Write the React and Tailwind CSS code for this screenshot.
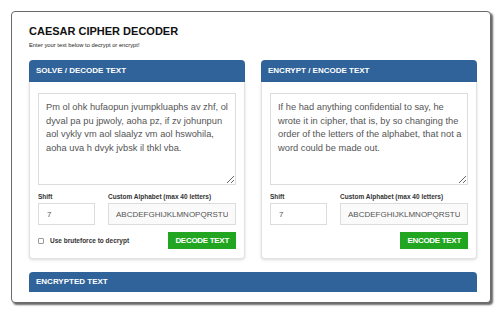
import React from 'react';

const cipherText =
  'Pm ol ohk hufaopun jvumpkluaphs av zhf, ol dyval pa pu jpwoly, aoha pz, if zv johunpun aol vykly vm aol slaalyz vm aol hswohila, aoha uva h dvyk jvbsk il thkl vba.';
const plainText =
  'If he had anything confidential to say, he wrote it in cipher, that is, by so changing the order of the letters of the alphabet, that not a word could be made out.';
const alphabet = 'ABCDEFGHIJKLMNOPQRSTUVWXYZ';

function Panel({ title, text, button, bruteforce }) {
  return (
    <div className="flex flex-col">
      <div className="h-[22px] rounded-t-[4px] bg-[#2f6399] px-[7px] flex items-center text-[8px] font-bold text-white">
        {title}
      </div>
      <div className="border border-t-0 border-[#e2e2e2] rounded-b-[4px] bg-white px-[8px] pt-[11px] pb-[9px] shadow-[0_1px_3px_rgba(0,0,0,0.15)]">
        <textarea
          readOnly
          defaultValue={text}
          className="block w-full h-[92px] border border-[#dcdcdc] pl-[7px] pr-[1px] pt-[7px] pb-[4px] text-[9.3px] leading-[13.5px] text-[#555] outline-none resize-y"
        />
        <div className="mt-[8px] flex gap-[13px]">
          <div className="w-[57px]">
            <div className="text-[6.5px] font-bold text-[#333] leading-[8px]">Shift</div>
            <input
              readOnly
              defaultValue="7"
              className="mt-[2px] block w-full h-[22px] border border-[#dcdcdc] px-[8px] text-[8px] text-[#555] outline-none"
            />
          </div>
          <div className="flex-1">
            <div className="text-[6.5px] font-bold text-[#333] leading-[8px]">Custom Alphabet (max 40 letters)</div>
            <input
              readOnly
              defaultValue={alphabet}
              className="mt-[2px] block w-full h-[22px] border border-[#dcdcdc] bg-[#fafafa] px-[7px] text-[8px] text-[#555] outline-none"
            />
          </div>
        </div>
        <div className="mt-[7px] flex items-center justify-between h-[17px]">
          {bruteforce ? (
            <label className="flex items-center gap-[6px] text-[6.5px] font-bold text-[#333]">
              <span className="block w-[6px] h-[6px] border border-[#999] rounded-[1px] bg-white" />
              Use bruteforce to decrypt
            </label>
          ) : (
            <span />
          )}
          <button className="h-[17px] px-[7px] bg-[#22a622] text-white text-[8px] font-bold tracking-[-0.3px]">
            {button}
          </button>
        </div>
      </div>
    </div>
  );
}

export default function App() {
  return (
    <div
      className="w-[500px] h-[313px] bg-white pl-[11px] pt-[11px] overflow-hidden"
      style={{ fontFamily: '"Liberation Sans", Arial, sans-serif' }}
    >
      <div className="w-[480px] h-[292px] border border-[#6a6a6a] rounded-[4px] bg-white shadow-[2px_2px_2px_rgba(0,0,0,0.6)] pl-[17px] pr-[13px] pt-[12px] overflow-hidden">
        <h1 className="text-[11px] font-bold text-[#111] leading-[14px]">CAESAR CIPHER DECODER</h1>
        <p className="mt-[3px] text-[5.8px] text-[#222] leading-[8px]">Enter your text below to decrypt or encrypt!</p>
        <div className="mt-[11px] grid grid-cols-2 gap-[16px]">
          <Panel title="SOLVE / DECODE TEXT" text={cipherText} button="DECODE TEXT" bruteforce />
          <Panel title="ENCRYPT / ENCODE TEXT" text={plainText} button="ENCODE TEXT" />
        </div>
        <div className="mt-[13px] h-[20px] rounded-t-[4px] bg-[#2f6399] px-[7px] flex items-center text-[8px] font-bold text-white">
          ENCRYPTED TEXT
        </div>
      </div>
    </div>
  );
}
